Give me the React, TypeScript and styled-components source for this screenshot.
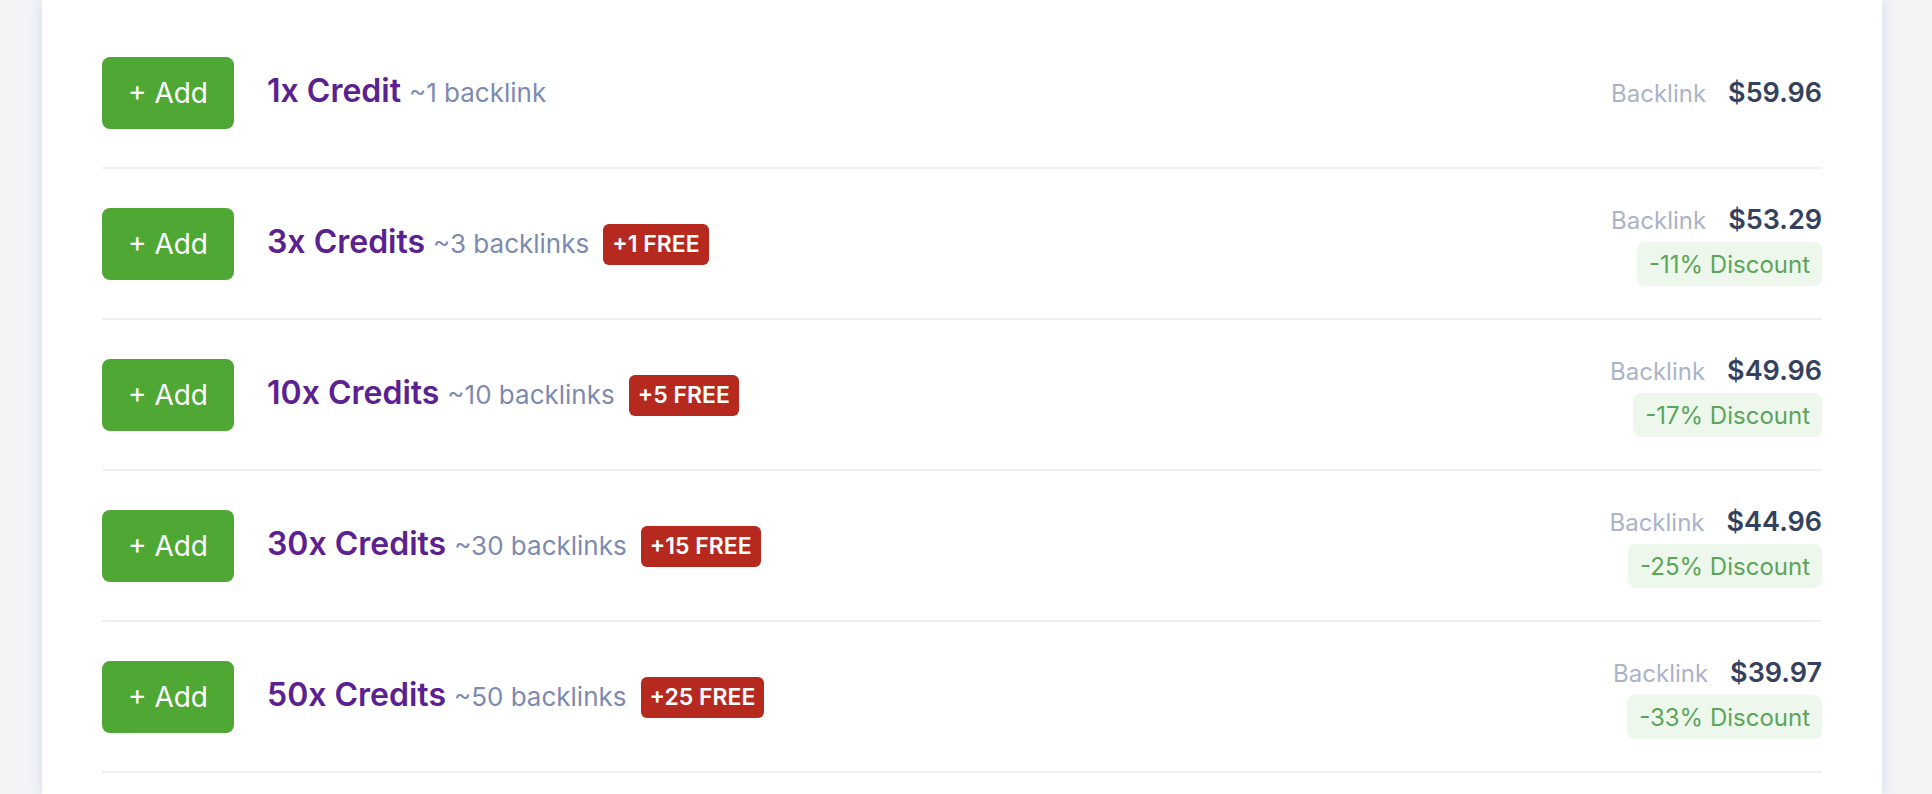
import styled, { createGlobalStyle } from "styled-components";

const GlobalStyle = createGlobalStyle`
  html, body {
    margin: 0;
    padding: 0;
    background: #f3f4f6;
    overflow: hidden;
  }
  body {
    font-family: Inter, "Noto Sans", sans-serif;
  }
`;

const Page = styled.div`
  padding: 0 50px 0 42px;
  min-height: 794px;
`;

const Card = styled.div`
  background: #ffffff;
  min-height: 794px;
  padding: 18px 60px 0;
  box-sizing: border-box;
  box-shadow: 0 0 14px rgba(96, 122, 200, 0.22);
`;

const Row = styled.div`
  display: flex;
  align-items: center;
  justify-content: space-between;
  height: 88px;
  padding: 31px 0 30px;
  border-bottom: 2px solid #edf0f5;
`;

const Left = styled.div`
  display: flex;
  align-items: center;
`;

const AddButton = styled.button`
  width: 132px;
  height: 72px;
  border: 0;
  border-radius: 8px;
  background: #4fa834;
  color: #ffffff;
  font-family: Inter, sans-serif;
  font-size: 28px;
  font-weight: 400;
  cursor: pointer;
  margin-right: 33px;
  &:hover {
    background: #45962d;
  }
`;

const TitleLine = styled.div`
  white-space: nowrap;
  line-height: 40px;
`;

const Title = styled.span`
  color: #5b2190;
  font-size: 32px;
  font-weight: 600;
`;

const Sub = styled.span`
  color: #7d8ab0;
  font-size: 26px;
  margin-left: 8px;
`;

const FreeBadge = styled.span`
  display: inline-flex;
  align-items: center;
  height: 41px;
  padding: 0 9px;
  margin-left: 14px;
  border-radius: 6px;
  background: #b5291f;
  color: #ffffff;
  font-size: 23px;
  font-weight: 600;
  white-space: nowrap;
`;

const Right = styled.div`
  display: flex;
  flex-direction: column;
  align-items: flex-end;
  gap: 4px;
`;

const PriceLine = styled.div`
  display: flex;
  align-items: baseline;
  gap: 22px;
  height: 36px;
  line-height: 36px;
`;

const Unit = styled.span`
  color: #abb3c8;
  font-size: 24px;
`;

const Price = styled.span`
  color: #344260;
  font-size: 27px;
  font-weight: 600;
`;

const Discount = styled.span`
  display: inline-flex;
  align-items: center;
  height: 44px;
  padding: 0 12px;
  border-radius: 8px;
  background: #eef7ec;
  color: #5ba55b;
  font-size: 24px;
`;

type Pack = {
  title: string;
  sub: string;
  free?: string;
  price: string;
  discount?: string;
};

const packs: Pack[] = [
  { title: "1x Credit", sub: "~1 backlink", price: "$59.96" },
  { title: "3x Credits", sub: "~3 backlinks", free: "+1 FREE", price: "$53.29", discount: "-11% Discount" },
  { title: "10x Credits", sub: "~10 backlinks", free: "+5 FREE", price: "$49.96", discount: "-17% Discount" },
  { title: "30x Credits", sub: "~30 backlinks", free: "+15 FREE", price: "$44.96", discount: "-25% Discount" },
  { title: "50x Credits", sub: "~50 backlinks", free: "+25 FREE", price: "$39.97", discount: "-33% Discount" },
];

export default function App() {
  return (
    <>
      <GlobalStyle />
      <Page>
        <Card>
          {packs.map((p) => (
            <Row key={p.title}>
              <Left>
                <AddButton>+ Add</AddButton>
                <TitleLine>
                  <Title>{p.title}</Title>
                  <Sub>{p.sub}</Sub>
                </TitleLine>
                {p.free && <FreeBadge>{p.free}</FreeBadge>}
              </Left>
              <Right>
                <PriceLine>
                  <Unit>Backlink</Unit>
                  <Price>{p.price}</Price>
                </PriceLine>
                {p.discount && <Discount>{p.discount}</Discount>}
              </Right>
            </Row>
          ))}
        </Card>
      </Page>
    </>
  );
}
